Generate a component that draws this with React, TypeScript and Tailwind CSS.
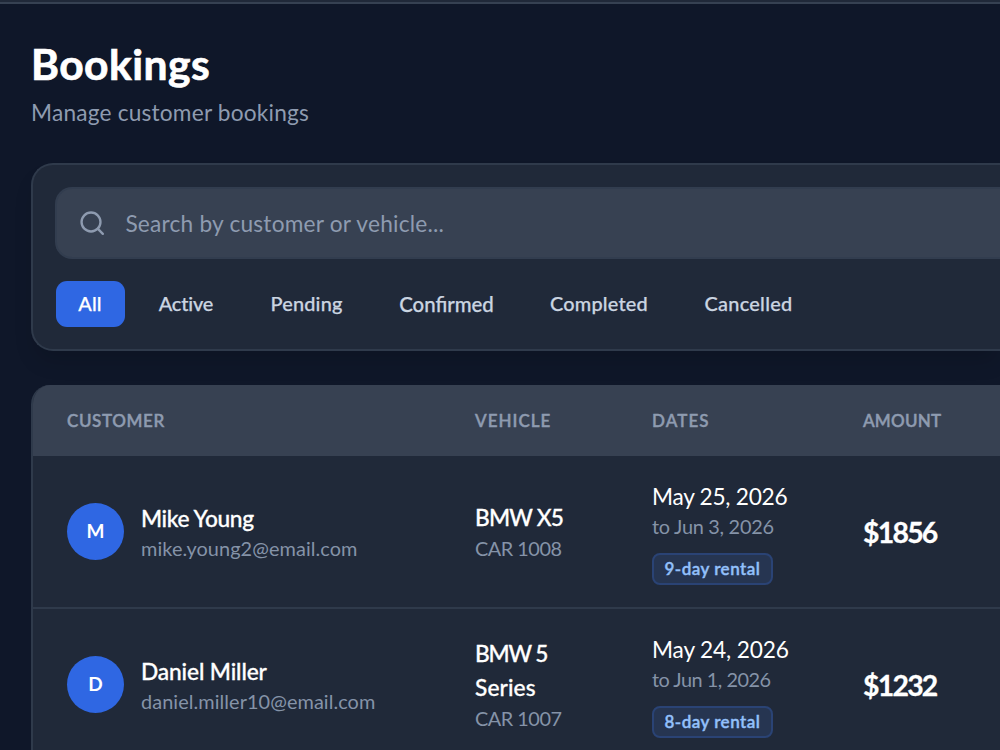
import { Search } from "lucide-react";

const tabs = [
  { label: "All", box: "w-[69px] bg-[#2f67e3] text-white", type: "text-[19.9px] tracking-[0.1px]" },
  { label: "Active", box: "w-[100px] text-[#cbd5e1]", type: "text-[19.9px] tracking-[-0.15px]" },
  { label: "Pending", box: "w-[118px] text-[#cbd5e1]", type: "text-[19.9px] tracking-[0.19px]" },
  { label: "Confirmed", box: "w-[139px] text-[#cbd5e1]", type: "text-[20.4px]" },
  { label: "Completed", box: "w-[143px] text-[#cbd5e1]", type: "text-[19.9px] tracking-[0.2px]" },
  { label: "Cancelled", box: "w-[133px] text-[#cbd5e1]", type: "text-[19.9px] tracking-[0.28px]" },
];

const headers = [
  { label: "Customer", type: "tracking-[0.62px]" },
  { label: "Vehicle", type: "tracking-[1px]" },
  { label: "Dates", type: "tracking-[1.1px]" },
  { label: "Amount", type: "tracking-[0.2px]" },
];

const bookings = [
  {
    initial: "M",
    name: "Mike Young",
    nameType: "tracking-[-0.37px]",
    email: "mike.young2@email.com",
    vehicle: [{ text: "BMW X5", type: "tracking-[-0.8px]" }],
    plate: "CAR 1008",
    start: "May 25, 2026",
    startType: "tracking-[-0.27px]",
    end: "to Jun 3, 2026",
    endType: "tracking-[-0.28px]",
    length: "9-day rental",
    amount: "$1856",
  },
  {
    initial: "D",
    name: "Daniel Miller",
    nameType: "tracking-[-0.12px]",
    email: "daniel.miller10@email.com",
    vehicle: [
      { text: "BMW 5", type: "tracking-[-1.2px]" },
      { text: "Series", type: "tracking-[0.1px]" },
    ],
    plate: "CAR 1007",
    start: "May 24, 2026",
    startType: "tracking-[-0.16px]",
    end: "to Jun 1, 2026",
    endType: "tracking-[-0.5px]",
    length: "8-day rental",
    amount: "$1232",
  },
];

const columns = "grid grid-cols-[408px_177px_211px_1fr] px-[34px]";

function BookingRow({ booking }: { booking: (typeof bookings)[number] }) {
  return (
    <div className={`${columns} h-[153px] shrink-0 items-center border-b-2 border-[#2f3a4b]`}>
      <div className="flex items-center gap-[17px]">
        <div className="flex size-[57px] items-center justify-center rounded-full bg-[#2f67e3] text-[19px] font-bold text-white">
          {booking.initial}
        </div>
        <div>
          <div className={`pt-px text-[22.7px] leading-[34px] font-medium text-white [-webkit-text-stroke:0.3px] ${booking.nameType}`}>
            {booking.name}
          </div>
          <div className="-mt-0.5 pb-px text-[19.9px] leading-[28px] tracking-[0.07px] text-[#8593a8]">{booking.email}</div>
        </div>
      </div>
      <div>
        {booking.vehicle.map((line) => (
          <div
            key={line.text}
            className={`text-[22.7px] leading-[34px] font-medium text-white [-webkit-text-stroke:0.3px] ${line.type}`}
          >
            {line.text}
          </div>
        ))}
        <div className="-mt-px pb-px text-[19.9px] leading-[28px] tracking-[-0.5px] text-[#8593a8]">{booking.plate}</div>
      </div>
      <div className="flex flex-col items-start">
        <div className={`pt-px text-[22.7px] leading-[34px] text-white ${booking.startType}`}>{booking.start}</div>
        <div className={`-mt-0.5 text-[19.9px] leading-[28px] text-[#8593a8] ${booking.endType}`}>{booking.end}</div>
        <div className="mt-[13px] flex h-8 items-center rounded-[8px] border-2 border-[#2a4375] bg-[#263551] px-[10.5px] pt-px text-[17px] font-semibold tracking-[0.48px] text-[#93c0fb] [-webkit-text-stroke:0.4px]">
          {booking.length}
        </div>
      </div>
      <div className="pt-px text-[28.4px] leading-10 font-bold tracking-[-1.75px] text-white [-webkit-text-stroke:0.3px]">
        {booking.amount}
      </div>
    </div>
  );
}

export default function App() {
  return (
    <div className="flex h-[750px] w-full flex-col overflow-hidden bg-[#0f1729] font-['Lato','Liberation_Sans',sans-serif]">
      <div className="h-1 shrink-0 border-b-2 border-[#364152] bg-[#202939]" />
      <main className="flex min-h-0 flex-1 flex-col pt-[34px] pl-[31px]">
        <h1 className="text-[42.6px] leading-[51px] font-bold tracking-[0.45px] text-white [-webkit-text-stroke:0.7px]">
          Bookings
        </h1>
        <p className="mt-[7px] text-[22.7px] leading-[34px] tracking-[0.19px] text-[#8e9bb0]">Manage customer bookings</p>

        <section className="mt-[33px] flex h-[188px] shrink-0 flex-col rounded-l-[22px] border-2 border-r-0 border-[#2f3a4b] bg-[#202939] pt-[22px] pl-[22px] shadow-[0_14px_21px_-4px_rgba(0,0,0,0.14)]">
          <div className="flex h-[72px] shrink-0 items-center rounded-l-[17px] border-2 border-r-0 border-[#323d4f] bg-[#374152] pl-[21px]">
            <Search className="size-[28.4px] text-[#8e9bb0]" strokeWidth={2} />
            <span className="ml-[19px] pt-0.5 text-[22.7px] leading-[34px] tracking-[0.21px] text-[#8e9bb0]">
              Search by customer or vehicle...
            </span>
          </div>
          <div className="mt-[22px] flex gap-[11.5px] pl-[0.5px]">
            {tabs.map((tab) => (
              <button
                key={tab.label}
                className={`flex h-[46px] items-center justify-center rounded-[11px] font-medium [-webkit-text-stroke:0.25px] ${tab.box} ${tab.type}`}
              >
                {tab.label}
              </button>
            ))}
          </div>
        </section>

        <section className="mt-[34px] flex min-h-0 flex-1 flex-col overflow-hidden rounded-tl-[19px] border-l-2 border-[#2f3a4b] bg-[#202939]">
          <div className={`${columns} h-[71px] shrink-0 items-center bg-[#374152]`}>
            {headers.map((header) => (
              <div
                key={header.label}
                className={`text-[17px] font-semibold text-[#8e9bb0] uppercase [-webkit-text-stroke:0.4px] ${header.type}`}
              >
                {header.label}
              </div>
            ))}
          </div>
          {bookings.map((booking) => (
            <BookingRow key={booking.name} booking={booking} />
          ))}
        </section>
      </main>
    </div>
  );
}
